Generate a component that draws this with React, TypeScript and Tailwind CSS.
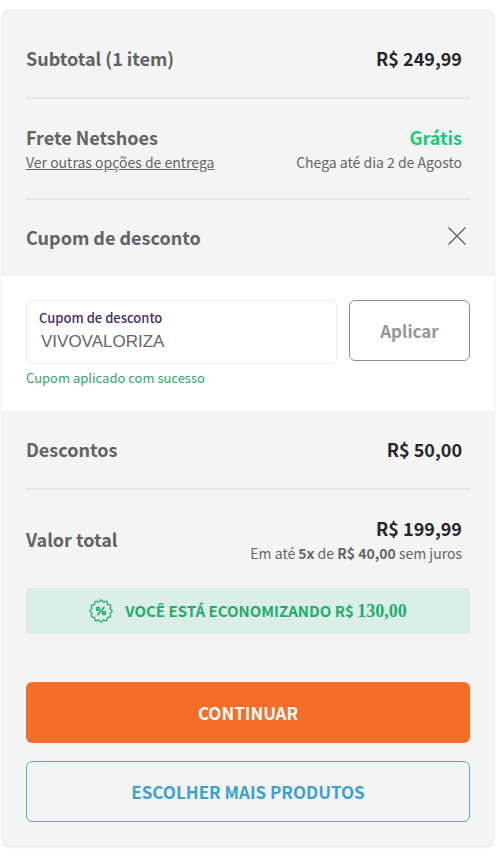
import { useState } from "react";

type SummaryRowProps = {
  label: string;
  link?: string;
  value: string;
  valueColor?: string;
  note?: React.ReactNode;
  className?: string;
};

function SummaryRow({ label, link, value, valueColor = "text-[#26262a]", note, className = "" }: SummaryRowProps) {
  return (
    <div className={`flex items-center justify-between pr-2 ${className}`}>
      <div>
        <h2 className="text-lg leading-7 font-bold text-[#626264]">{label}</h2>
        {link && (
          <a href="#entrega" className="block text-sm leading-[22px] underline">
            {link}
          </a>
        )}
      </div>
      <div className="text-right">
        <p className={`text-lg leading-7 font-bold ${valueColor}`}>{value}</p>
        {note && <p className="text-sm leading-[22px]">{note}</p>}
      </div>
    </div>
  );
}

function DiscountBadge() {
  // wavy seal with twelve lobes
  const steps = 144;
  const points = Array.from({ length: steps }, (_, i) => {
    const angle = (i / steps) * Math.PI * 2;
    const radius = 10.2 + 0.9 * Math.cos(angle * 12);
    return `${(12 + radius * Math.sin(angle)).toFixed(2)} ${(12 - radius * Math.cos(angle)).toFixed(2)}`;
  });

  return (
    <svg viewBox="0 0 24 24" className="size-6" fill="none" stroke="currentColor" aria-hidden="true">
      <path d={`M${points.join("L")}Z`} strokeWidth="1.3" strokeLinejoin="round" />
      <path d="M15 8.2 9 15.8" strokeWidth="1.6" strokeLinecap="round" />
      <circle cx="9" cy="9.9" r="1.5" strokeWidth="1.6" />
      <circle cx="15" cy="14.1" r="1.5" strokeWidth="1.6" />
    </svg>
  );
}

export default function App() {
  const [coupon, setCoupon] = useState("VIVOVALORIZA");

  return (
    <div className="bg-white pt-[9px] pr-1.5 pb-4 pl-0.5 font-['Noto_Sans_CJK_SC',sans-serif] text-[#666668]">
      <main className="rounded-lg bg-[#f4f4f4] pb-6 shadow-[0_1px_3px_rgba(0,0,0,0.12)]">
        <section className="px-6">
          <SummaryRow
            label="Subtotal (1 item)"
            value="R$ 249,99"
            className="border-b-2 border-[#e8e8e8] pt-[35px] pb-[25px]"
          />
          <SummaryRow
            label="Frete Netshoes"
            link="Ver outras opções de entrega"
            value="Grátis"
            valueColor="text-[#12cb78]"
            note="Chega até dia 2 de Agosto"
            className="border-b-2 border-[#e8e8e8] pt-6 pb-[25px]"
          />
          <div className="flex items-start justify-between pt-[23px] pr-1 pb-[25px]">
            <h2 className="text-lg leading-7 font-bold text-[#626264]">Cupom de desconto</h2>
            <button type="button" aria-label="Fechar" className="pt-1">
              <svg viewBox="0 0 18 18" className="size-[18px]" stroke="#626264" strokeWidth="1.4" aria-hidden="true">
                <path d="M0.5 0.5 17.5 17.5M17.5 0.5 0.5 17.5" />
              </svg>
            </button>
          </div>
        </section>

        <form className="bg-white px-6 pt-6 pb-[23px]" onSubmit={(e) => e.preventDefault()}>
          <div className="flex items-start gap-3">
            <div className="min-w-0 flex-1 rounded-md border border-[#ececec] px-3 pt-[5px] pb-[9px]">
              <label htmlFor="coupon" className="block text-[13px] leading-6 font-medium text-[#4a2a66]">
                Cupom de desconto
              </label>
              <input
                id="coupon"
                value={coupon}
                onChange={(e) => setCoupon(e.target.value)}
                className="block w-full px-0.5 font-['Liberation_Sans',sans-serif] text-[17px] leading-6 text-[#666668] outline-none"
              />
            </div>
            <button
              type="submit"
              className="h-[61px] w-[121px] rounded-md border border-[#8e8e8e] text-[17px] font-bold text-[#969696]"
            >
              Aplicar
            </button>
          </div>
          <p className="pt-1 text-[13px] leading-5 text-[#30a66d]">Cupom aplicado com sucesso</p>
        </form>

        <section className="px-6">
          <SummaryRow
            label="Descontos"
            value="R$ 50,00"
            className="border-b-2 border-[#e8e8e8] pt-6 pb-[25px]"
          />
          <SummaryRow
            label="Valor total"
            value="R$ 199,99"
            note={
              <>
                Em até <b>5x</b> de <b>R$ 40,00</b> sem juros
              </>
            }
            className="py-6"
          />
          <div className="flex h-[46px] items-center justify-center gap-3 rounded bg-[#dceee8] text-[#1fad6b]">
            <DiscountBadge />
            <p className="text-[15px] font-bold">
              VOCÊ ESTÁ ECONOMIZANDO R$ <span className="font-['Liberation_Serif',serif] text-lg">130,00</span>
            </p>
          </div>
          <div className="flex flex-col gap-[18px] pt-12">
            <button type="button" className="h-[61px] rounded-md bg-[#f76d28] text-[17px] font-bold text-white">
              CONTINUAR
            </button>
            <button
              type="button"
              className="h-[61px] rounded-md border border-[#5aa7cc] text-[17px] font-bold text-[#3d9fd3]"
            >
              ESCOLHER MAIS PRODUTOS
            </button>
          </div>
        </section>
      </main>
    </div>
  );
}
